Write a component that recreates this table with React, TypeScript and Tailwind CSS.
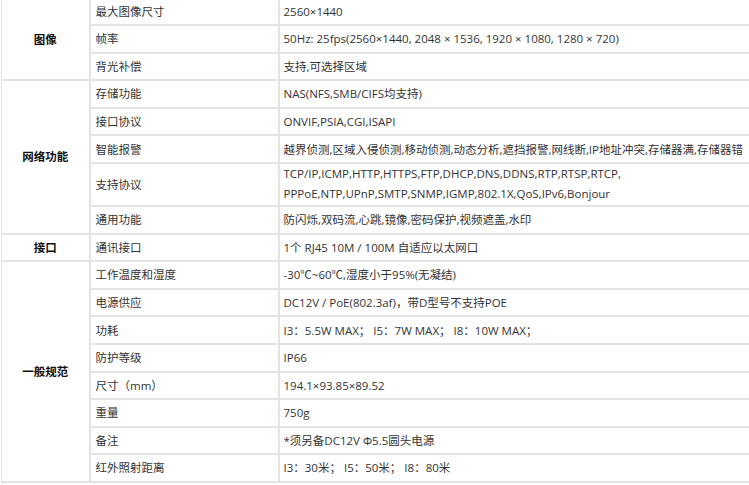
const SPECS: { group: string; rows: [string, React.ReactNode][] }[] = [
  {
    group: "图像",
    rows: [
      ["最大图像尺寸", "2560×1440"],
      ["帧率", "50Hz: 25fps(2560×1440, 2048 × 1536, 1920 × 1080, 1280 × 720)"],
      ["背光补偿", "支持,可选择区域"],
    ],
  },
  {
    group: "网络功能",
    rows: [
      ["存储功能", "NAS(NFS,SMB/CIFS均支持)"],
      ["接口协议", "ONVIF,PSIA,CGI,ISAPI"],
      ["智能报警", "越界侦测,区域入侵侦测,移动侦测,动态分析,遮挡报警,网线断,IP地址冲突,存储器满,存储器错"],
      [
        "支持协议",
        <>
          TCP/IP,ICMP,HTTP,HTTPS,FTP,DHCP,DNS,DDNS,RTP,RTSP,RTCP,
          <br />
          PPPoE,NTP,UPnP,SMTP,SNMP,IGMP,802.1X,QoS,IPv6,Bonjour
        </>,
      ],
      ["通用功能", "防闪烁,双码流,心跳,镜像,密码保护,视频遮盖,水印"],
    ],
  },
  {
    group: "接口",
    rows: [["通讯接口", "1个 RJ45 10M / 100M 自适应以太网口"]],
  },
  {
    group: "一般规范",
    rows: [
      ["工作温度和湿度", "-30℃~60℃,湿度小于95%(无凝结)"],
      ["电源供应", "DC12V / PoE(802.3af)，带D型号不支持POE"],
      ["功耗", "I3：5.5W MAX； I5：7W MAX； I8：10W MAX；"],
      ["防护等级", "IP66"],
      ["尺寸（mm）", "194.1×93.85×89.52"],
      ["重量", "750g"],
      ["备注", "*须另备DC12V Φ5.5圆头电源"],
      ["红外照射距离", "I3：30米； I5：50米； I8：80米"],
    ],
  },
]

export default function App() {
  return (
    <div className="w-[749px] h-[485px] bg-white overflow-hidden pl-[1px]">
      <table
        className="w-[760px] border-collapse table-fixed text-[11.5px] text-[#333]"
        style={{ fontFamily: '"Open Sans", "Noto Sans CJK SC", sans-serif' }}
      >
        <colgroup>
          <col className="w-[88px]" />
          <col className="w-[189px]" />
          <col />
        </colgroup>
        <tbody>
          {SPECS.map((g, gi) =>
            g.rows.map(([name, value], ri) => {
              const first = gi === 0 && ri === 0
              const twoLine = name === "支持协议"
              return (
                <tr key={name}>
                  {ri === 0 && (
                    <td
                      rowSpan={g.rows.length}
                      className={`border-2 border-l-[1.5px] border-[#e3e3e3] text-center font-bold text-[#111] ${first ? "border-t-0" : ""}`}
                    >
                      {g.group}
                    </td>
                  )}
                  <td
                    className={`border-2 border-[#e3e3e3] pl-[5px] ${first ? "border-t-0 h-[25px]" : twoLine ? "h-[43px]" : "h-[27.6px]"}`}
                  >
                    {name}
                  </td>
                  <td
                    className={`border-2 border-r-0 border-[#e3e3e3] pl-[4px] whitespace-nowrap ${twoLine ? "leading-[20px]" : ""} ${first ? "border-t-0" : ""}`}
                  >
                    {value}
                  </td>
                </tr>
              )
            })
          )}
        </tbody>
      </table>
    </div>
  )
}
